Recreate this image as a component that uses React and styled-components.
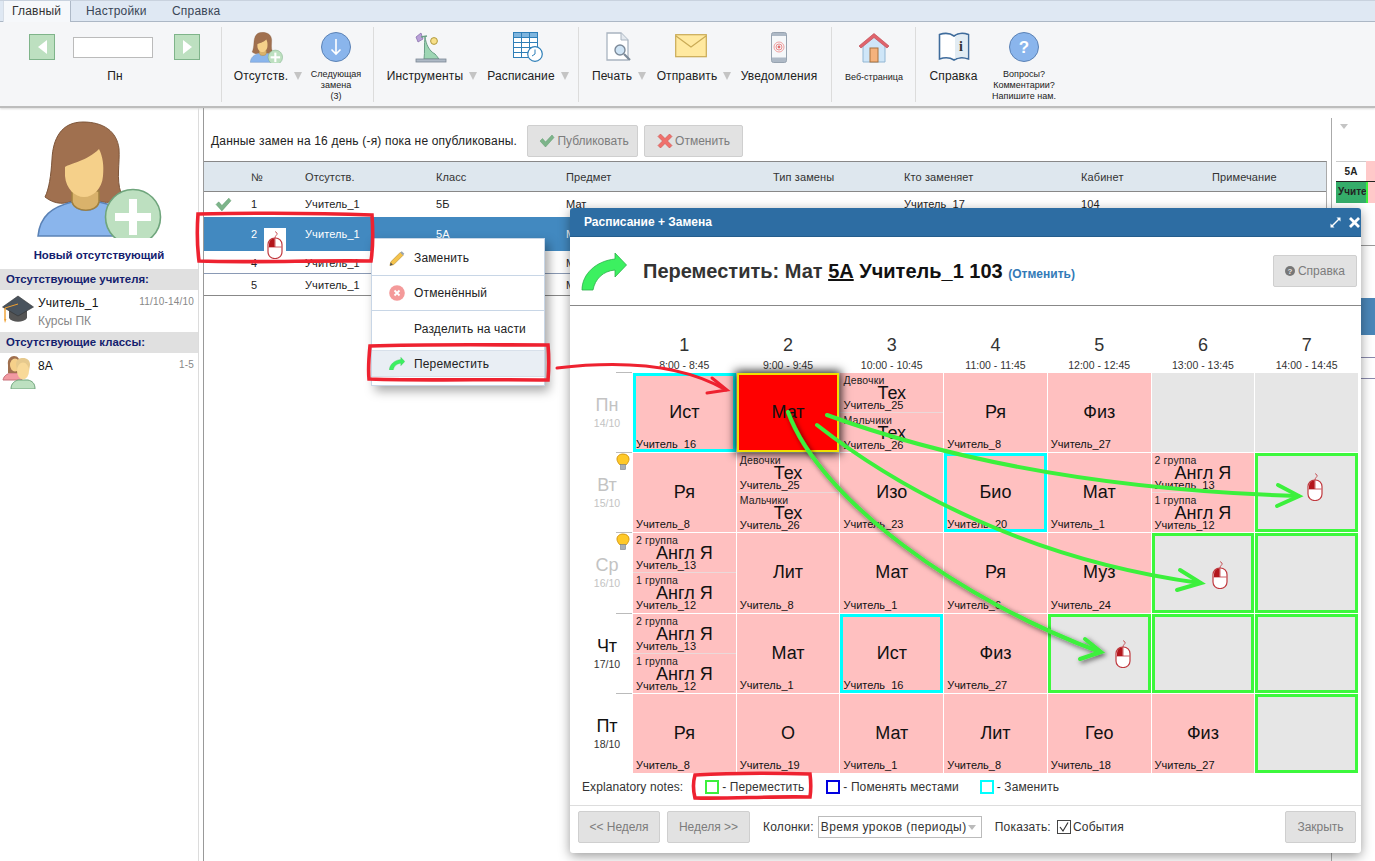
import React from "react";
import styled, { createGlobalStyle } from "styled-components";

const Global = createGlobalStyle`
  html, body { margin: 0; padding: 0; background: #fff; overflow: hidden; }
  body { font-family: "Liberation Sans", Arial, sans-serif; font-size: 12px; color: #222; }
  * { box-sizing: border-box; }
`;

const Page = styled.div`position: relative; width: 1375px; height: 861px; overflow: hidden; background: #fff;`;

/* ---- ribbon ---- */
const TabBar = styled.div`display: flex; height: 22px; padding-left: 3px; background: #dfe8f3; border-top: 1px solid #c9d2de; border-bottom: 1px solid #aeb9c7;`;
const Tab = styled.div`
  height: 21px; padding: 3px 0 0 ${p => p.$active ? 8 : 15}px; width: ${p => p.$w}px; color: #3a4656; letter-spacing: .2px;
  ${p => p.$active && `background: #f6f8fb; border-right: 1px solid #aeb9c7; border-left: 1px solid #d6dde6; color: #333;`}
`;
const Ribbon = styled.div`display: flex; height: 86px; background: #f5f6f8; border-bottom: 2px solid #bdbdbd; box-shadow: 0 1px 2px rgba(0,0,0,.15);`;
const Group = styled.div`display: flex; width: ${p => p.$w}px; height: 75px; margin-top: 5px; padding-left: ${p => p.$pl || 0}px; ${p => !p.$last && "border-right: 1px solid #dcdcdc;"}`;
const Item = styled.div`display: flex; flex-direction: column; align-items: center; width: ${p => p.$w}px; padding-top: 5px; margin-left: ${p => p.$ml || 0}px;`;
const IconSlot = styled.div`height: 33px; display: flex; align-items: flex-start; justify-content: center; margin-left: ${p => p.$shift || 0}px;`;
const ItemLabel = styled.div`display: flex; align-items: center; margin-top: 4px; font-size: 12px; color: #222; white-space: nowrap; letter-spacing: .14px;`;
const TinyLabel = styled.div`font-size: 9px; line-height: 11px; text-align: center; margin-top: ${p => p.$mt ?? 5}px; color: #222; white-space: nowrap;`;
const Drop = styled.span`display: inline-block; margin-left: 6px; width: 0; height: 0; border-left: 4px solid transparent; border-right: 4px solid transparent; border-top: 8px solid #c4c4c4;`;
const NavRow = styled.div`display: flex; align-items: center; width: 171px; justify-content: space-between; margin: 7px 0 0 29px;`;
const NavBtn = styled.div`
  width: 26px; height: 26px; background: #bde0c0; border: 1px solid #7fb48a; display: flex; align-items: center; justify-content: center;
  &::after { content: ""; border-top: 7px solid transparent; border-bottom: 7px solid transparent;
    ${p => p.$dir === "left" ? "border-right: 9px solid #fff;" : "border-left: 9px solid #fff;"} }
`;
const NavInput = styled.div`width: 80px; height: 21px; margin-right: 3px; background: #fff; border: 1px solid #bbb;`;
const NavDay = styled.div`text-align: center; margin-top: 9px; padding-left: 30px; width: 200px; color: #222;`;

/* ---- main ---- */
const Main = styled.div`display: flex; height: 753px;`;
const Sidebar = styled.aside`width: 199px; padding-top: 13px; border-right: 1px solid #dcdcdc; flex: none;`;
const AvatarBox = styled.div`display: flex; justify-content: center;`;
const NewLabel = styled.div`text-align: center; margin-top: 11px; height: 20px; font-weight: bold; font-size: 11.4px; color: #14206e;`;
const SideHead = styled.div`height: 21px; line-height: 21px; background: #e0e0e0; padding-left: 6px; font-weight: bold; font-size: 11.4px; color: #14206e;`;
const SideRow = styled.div`display: flex; height: ${p => p.$h}px; padding: 6px 4px 0 2px;`;
const SideIcon = styled.div`width: 36px; flex: none;`;
const SideText = styled.div`flex: 1; line-height: 14px;`;
const SideName = styled.div`color: #111; letter-spacing: .2px;`;
const SideSub = styled.div`color: #888; margin-top: 4px;`;
const SideDate = styled.div`font-size: 10px; color: #888; letter-spacing: .2px;`;
const Gap = styled.div`width: 4px; flex: none;`;
const Content = styled.section`width: 1124px; flex: none; border-left: 1px solid #999; margin-right: 4px; height: 100%;`;
const TopBar = styled.div`display: flex; align-items: center; height: 53px; padding: 13px 0 0 7px; gap: 10px;`;
const TopText = styled.div`color: #222; letter-spacing: .18px;`;
const GreyBtn = styled.div`
  display: flex; align-items: center; justify-content: center; gap: ${p => p.$gap ?? 2}px; width: ${p => p.$w}px; height: ${p => p.$h || 32}px;
  background: #e2e2e2; border: 1px solid #cfcfcf; border-radius: 2px; color: #7c7c7c; font-size: 12px; flex: none;
  margin-left: ${p => p.$ml || 0}px; padding-left: ${p => p.$pl || 0}px;
`;
const Table = styled.div`width: 1123px; border-top: 1px solid #888; border-right: 1px solid #aaa;`;
const Columns = "47px 54px 131px 130px 207px 131px 177px 131px 114px";
const HeadRow = styled.div`display: grid; grid-template-columns: ${Columns}; height: 30px; align-items: center; background: #dee7ee; border-bottom: 1px solid #888; color: #333; font-size: 11px; letter-spacing: .1px;`;
const Row = styled.div`
  display: grid; grid-template-columns: ${Columns}; height: ${p => p.$h}px; padding-top: ${p => p.$pt}px; font-size: 11px; letter-spacing: .1px;
  color: ${p => p.$sel ? "#fff" : "#222"}; background: ${p => p.$sel ? "#4289c0" : "#fff"}; border-bottom: ${p => p.$line ? `1px solid ${p.$line}` : "none"};
`;
const CheckCell = styled.div`margin: -2px 0 0 11px;`;
const Right = styled.div`flex: 1; border-left: 1px solid #aaa; margin-top: 10px; padding-left: 4px; position: relative; overflow: hidden;`;
const RightArrow = styled.div`margin: 6px 0 0 4px; width: 0; height: 0; border-left: 4px solid transparent; border-right: 4px solid transparent; border-top: 5px solid #c4c4c4;`;
const RightHead = styled.div`display: flex; margin-top: 32px; height: 20px;`;
const RightCell = styled.div`width: 30px; text-align: center; font-weight: bold; font-size: 10px; line-height: 20px; border-top: 1px solid #ccc;`;
const RightPink = styled.div`flex: 1; background: #ffc9c9;`;
const RightRow = styled.div`display: flex; height: 22px; border-top: 1px solid #222;`;
const RightGreen = styled.div`width: 32px; background: #35ad6a; border-right: 2px solid #3cf03c; font-size: 10px; font-weight: bold; line-height: 20px; padding-left: 2px; overflow: hidden; white-space: nowrap;`;
const StripLine = styled.div`position: absolute; right: 0; width: 14px; top: ${p => p.$t}px; height: ${p => p.$h}px; background: ${p => p.$c};`;
const RowMouse = styled.div`position: absolute; left: 264px; top: 228px; width: 22px; height: 24px; background: #fff; display: flex; justify-content: center; z-index: 2; & > svg { margin-top: 3px; }`;

/* ---- context menu ---- */
const Menu = styled.div`
  position: absolute; left: 371px; top: 238px; width: 174px; height: 148px; padding-top: 2px; background: #fff; border: 1px solid #c8d6e6;
  box-shadow: 4px 5px 10px rgba(0,0,0,.35); z-index: 3;
`;
const MenuItem = styled.div`
  display: flex; align-items: center; height: ${p => p.$h || 35}px; border-bottom: ${p => p.$plain ? "none" : "1px solid #c8d6e6"}; padding-left: 17px; gap: 9px; color: #222; letter-spacing: .15px;
  ${p => p.$hl && "background: #e9eef4; margin-top: 4px; border-top: 1px solid #d8e0ea; border-bottom: 1px solid #d8e0ea;"}
`;
const MenuIcon = styled.div`width: 16px; height: 16px; flex: none; display: flex; align-items: center; justify-content: center;`;

/* ---- modal ---- */
const Modal = styled.div`
  position: absolute; left: 570px; top: 208px; width: 791px; height: 645px; background: #fff;
  box-shadow: 0 3px 12px rgba(0,0,0,.4); border-radius: 3px; z-index: 4; display: flex; flex-direction: column;
`;
const ModalBar = styled.div`display: flex; align-items: center; justify-content: space-between; height: 29px; flex: none; background: #2d6da3; border-radius: 3px 3px 0 0; border-bottom: 1px solid #255d8c; padding: 0 1px 0 14px; color: #fff; font-weight: bold; font-size: 12px;`;
const ModalTools = styled.div`display: flex; align-items: center; gap: 8px;`;
const TitleRow = styled.div`display: flex; align-items: center; height: 69px; flex: none; padding: 0 4px 0 11px; border-bottom: 1px solid #888;`;
const TitleText = styled.div`font-size: 20px; font-weight: bold; margin-left: 16px; color: #111; flex: 1; white-space: nowrap;`;
const TitleGrey = styled.span`color: #333;`;
const TitleU = styled.span`text-decoration: underline;`;
const CancelLink = styled.span`font-size: 12px; color: #337ab7;`;
const HeadGrid = styled.div`display: grid; grid-template-columns: 62px repeat(7, 1fr); column-gap: 1px; height: 67px; padding-right: 3px; flex: none;`;
const HeadCol = styled.div`display: flex; flex-direction: column; align-items: center; justify-content: flex-end; padding-bottom: 1px;`;
const HeadNum = styled.div`font-size: 18px; line-height: 20px; color: #333; margin-bottom: 4px;`;
const HeadTime = styled.div`font-size: 10.5px; line-height: 13px; color: #333; white-space: nowrap;`;
const Grid = styled.div`display: grid; grid-template-columns: 62px repeat(7, 1fr); grid-auto-rows: 79.2px; gap: 1px; padding-right: 3px; flex: none; height: 401px;`;
const DayCell = styled.div`position: relative; display: flex; flex-direction: column; align-items: center; justify-content: center; padding-right: 2px; color: ${p => p.$dim ? "#c3c3c3" : "#333"};`;
const DayTick = styled.div`position: absolute; top: -1px; right: 0; width: 16px; height: 1px; background: #bbb;`;
const DayName = styled.div`font-size: 18px; line-height: 20px; margin-left: 14px; ${p => p.$dark && "color: #111;"}`;
const DayDate = styled.div`font-size: 10.5px; line-height: 13px; margin: 2px 0 0 14px;`;
const Bulb = styled.div`position: absolute; right: 2px; top: 0; width: 14px; height: 18px;`;
const Cell = styled.div`
  position: relative; display: flex; flex-direction: column;
  background: ${p => p.$v === "red" ? "#ff0000" : p.$v === "empty" ? "#e6e6e6" : "#ffc0c0"};
  ${p => p.$v === "red" && "border: 2px solid #f0e000; box-shadow: 0 0 9px 2px rgba(0,0,0,.85); z-index: 2;"}
  ${p => p.$b === "cyan" && "outline: 3px solid #00ffff; outline-offset: -3px;"}
  ${p => p.$b === "green" && "outline: 3px solid #3cf83c; outline-offset: -3px;"}
`;
const CellName = styled.div`flex: 1; display: flex; align-items: center; justify-content: center; font-size: 18px; color: #111;`;
const CellTeacher = styled.div`font-size: 11px; line-height: 12px; margin-top: ${p => p.$over ? -14 : 0}px; padding: 0 0 2px 3px; color: #111; white-space: nowrap;`;
const Half = styled.div`
  flex: 1; display: flex; flex-direction: column; min-height: 0; padding-top: 2px;
  ${p => p.$top && "border-bottom: 1px solid #ebd9d9;"}
`;
const HalfLabel = styled.div`font-size: 10.5px; line-height: 11px; padding-left: 3px; color: #222; letter-spacing: .15px; white-space: nowrap;`;
const HalfName = styled.div`font-size: 18px; line-height: 13px; margin: 1px 0 -1px; text-align: center; color: #111;`;
const MouseSlot = styled.div`flex: 1; display: flex; align-items: center; justify-content: center; padding: ${p => p.$pt}px 0 ${p => p.$pb}px ${p => p.$pl}px;`;

const Legend = styled.div`display: flex; align-items: center; height: 32px; padding: 0 0 6px 12px; flex: none; border-bottom: 1px solid #ddd; color: #333; letter-spacing: .1px;`;
const LegendTitle = styled.div`margin-right: 22px;`;
const Swatch = styled.span`width: 14px; height: 14px; border: 2px solid ${p => p.$c}; margin-right: 3px; flex: none;`;
const LegendText = styled.div`margin-right: ${p => p.$mr}px; white-space: nowrap;`;
const Footer = styled.div`display: flex; align-items: center; flex: 1; padding: 0 5px 5px 8px; color: #333;`;
const FootLabel = styled.div`margin-left: ${p => p.$ml}px; white-space: nowrap; letter-spacing: .2px;`;
const Select = styled.div`
  position: relative; width: 164px; height: 22px; margin-left: 4px; border: 1px solid #bbb; background: #fff; padding: 3px 0 0 2px; color: #333; white-space: nowrap; letter-spacing: .4px;
  &::after { content: ""; position: absolute; right: 5px; top: 8px; border-left: 4px solid transparent; border-right: 4px solid transparent; border-top: 5px solid #bbb; }
`;
const CheckBox = styled.div`width: 14px; height: 14px; margin-left: 6px; border: 1px solid #444; display: flex; align-items: center; justify-content: center; background: #fff;`;
const Spacer = styled.div`flex: 1;`;
const Overlay = styled.svg`position: absolute; left: 0; top: 0; width: 1375px; height: 861px; z-index: 5; pointer-events: none;`;

/* ---- icons ---- */
const Person = ({ w }) => (
  <svg width={w} viewBox="0 0 125 117">
    <path d="M46 1C24 1 16 18 15 38C14 55 12 68 8 76C18 84 30 84 38 78L58 78C68 84 80 82 84 72C79 58 83 42 82 28C80 10 66 1 46 1Z" fill="#a0704f" stroke="#7d5539" strokeWidth="1" />
    <path d="M1 115C3 95 15 86 35 81C40 92 58 92 62 81C85 86 108 95 110 115Z" fill="#8ab5ec" stroke="#5b82b5" strokeWidth="1.5" />
    <path d="M35 70L35 81C38 92 60 92 62 81L62 70Z" fill="#d9b26b" stroke="#a08040" strokeWidth="1.5" />
    <path d="M28 46C34 42 50 40 62 28C66 36 67 45 66 55C65 68 56 76 47 76C38 76 29 68 28 55Z" fill="#f5d08a" />
    <circle cx="96" cy="96" r="27.5" fill="#bde0c0" stroke="#6fa57c" strokeWidth="1.6" />
    <rect x="92" y="78" width="8" height="36" fill="#fff" />
    <rect x="78" y="92" width="36" height="8" fill="#fff" />
  </svg>
);
const IconDown = () => (
  <svg width="30" height="30" viewBox="0 0 30 30"><circle cx="15" cy="15" r="14.5" fill="#8ab5ec" stroke="#5b82b5" /><path d="M15 7V22M10.5 17.5L15 22L19.5 17.5" fill="none" stroke="#fff" strokeWidth="1.6" /></svg>
);
const IconTools = () => (
  <svg width="32" height="31" viewBox="0 0 32 31">
    <path d="M1 5L6 1L8 7L3 10Z" fill="#b9a0d8" stroke="#8a72ad" strokeWidth=".8" />
    <path d="M6 5L12 4" stroke="#6a9f86" strokeWidth="1.5" />
    <path d="M10 5C11 12 14 19 20 22C22 24 23 26 24 27L9 27C10 20 9 12 10 5Z" fill="#9ed6b4" stroke="#6a9f86" strokeWidth="1" />
    <circle cx="19" cy="9" r="3.4" fill="#f8e08a" stroke="#b09a40" />
    <rect x="1" y="27" width="30" height="3" fill="#aeb9c6" stroke="#7c8794" strokeWidth=".8" />
  </svg>
);
const IconSchedule = () => (
  <svg width="30" height="30" viewBox="0 0 30 30">
    <rect x=".5" y=".5" width="24" height="25" fill="#fff" stroke="#2f7fb8" />
    <rect x=".5" y=".5" width="24" height="5" fill="#7fb5de" stroke="#2f7fb8" />
    <path d="M.5 10.5H24.5M.5 15.5H24.5M.5 20.5H24.5M8.5 .5V25.5M16.5 .5V25.5" stroke="#2f7fb8" fill="none" />
    <circle cx="22" cy="22" r="7.3" fill="#fff" stroke="#2f7fb8" strokeWidth="1.2" /><path d="M22 17.5V22L19 24" stroke="#2f7fb8" fill="none" />
  </svg>
);
const IconPrint = () => (
  <svg width="28" height="30" viewBox="0 0 28 30">
    <path d="M1 1H15L22 8V28H1Z" fill="#fff" stroke="#a9b4c0" strokeWidth="1.3" /><path d="M15 1V8H22" fill="#e4e9ef" stroke="#a9b4c0" />
    <circle cx="14" cy="18" r="5" fill="#cfe4f5" stroke="#7c8a99" strokeWidth="1.4" /><path d="M18 22L24 28" stroke="#7c8a99" strokeWidth="2.2" />
  </svg>
);
const IconMail = () => (
  <svg width="32" height="24" viewBox="0 0 32 24" style={{ marginTop: 2 }}><rect x=".7" y=".7" width="30.6" height="22" fill="#ffe9a0" stroke="#c9aa55" strokeWidth="1.2" /><path d="M1 2L16 13L31 2" fill="none" stroke="#c9aa55" strokeWidth="1.2" /></svg>
);
const IconPhone = () => (
  <svg width="16" height="31" viewBox="0 0 16 31"><rect x=".5" y=".5" width="15" height="30" rx="2" fill="#aeb9c6" stroke="#97a3b0" /><rect x="1" y="4" width="14" height="21.5" fill="#f6f8fa" /><circle cx="8" cy="15" r="5" fill="none" stroke="#f0a0a0" /><circle cx="8" cy="15" r="3" fill="none" stroke="#ec8c8c" /><circle cx="8" cy="15" r="1.4" fill="#e07070" /></svg>
);
const IconHouse = () => (
  <svg width="32" height="31" viewBox="0 0 32 31"><path d="M5 13V30H27V13L16 3Z" fill="#cfe6f8" stroke="#92b6d3" /><path d="M1 14L16 1.5L31 14L29 16L16 5.5L3 16Z" fill="#e0646c" stroke="#c04c54" strokeWidth=".7" /><rect x="12" y="16" width="8" height="14" fill="#f5b27c" stroke="#a8703c" /></svg>
);
const IconBook = () => (
  <svg width="32" height="30" viewBox="0 0 32 30"><path d="M16 4C12 1 6 1 1.5 2.5V27C6 25.5 12 25.5 16 28C20 25.5 26 25.5 30.5 27V2.5C26 1 20 1 16 4Z" fill="#fff" stroke="#3f6c9c" strokeWidth="1.6" /><path d="M17 4.5C20 2.5 25 2 29.5 3.2V25.7C25 24.6 20 25 17 26.7Z" fill="#e2ecf3" /><text x="23" y="19" fontSize="14" fontWeight="bold" fontFamily="Liberation Serif, serif" textAnchor="middle" fill="#333">i</text></svg>
);
const IconHelp = () => (
  <svg width="30" height="30" viewBox="0 0 30 30"><circle cx="15" cy="15" r="14.5" fill="#8ab5ec" stroke="#5b82b5" /><text x="15" y="21" fontSize="17" fontWeight="bold" fontFamily="Liberation Sans, sans-serif" textAnchor="middle" fill="#fff">?</text></svg>
);
const IconCap = () => (
  <svg width="32" height="29" viewBox="0 0 32 29" style={{ marginTop: -1 }}><path d="M7 14V23C10 28 22 28 25 23V14Z" fill="#555" /><path d="M16 1L31.5 12L16 21L.5 12Z" fill="#49535d" stroke="#333" strokeWidth=".6" /><path d="M3 13V24" stroke="#f0a030" strokeWidth="1.4" /><path d="M2 24L3 28L4.4 24Z" fill="#f0a030" /><path d="M3 13L16 9" stroke="#f0a030" strokeWidth="1" /></svg>
);
const IconClass = () => (
  <svg width="34" height="34" viewBox="0 0 34 34" style={{ marginTop: -4 }}>
    <path d="M1 25C2 20 6 19 8 18L16 18C19 19 20 22 20 25Z" fill="#f29aa2" stroke="#c8707a" />
    <path d="M6 10C5 4 9 1 12 1C16 1 18 4 18 9L18 18L6 18Z" fill="#a0704f" />
    <ellipse cx="13" cy="10" rx="5" ry="6.5" fill="#f5d08a" />
    <path d="M9 34C9 28 13 26 16 25L26 25C30 26 33 28 33 34Z" fill="#bde0c0" stroke="#6fa57c" />
    <path d="M14 9C14 4 18 3 21 3C25 3 28 5 28 10L27 16L15 16Z" fill="#e6c98d" />
    <ellipse cx="21" cy="16" rx="6" ry="8.5" fill="#f8d998" />
  </svg>
);
const IconBulb = () => (
  <svg width="14" height="18" viewBox="0 0 14 18"><path d="M3.5 11.5C2 9.5 1 8 1 6C1 3 3.5 1 7 1C10.5 1 13 3 13 6C13 8 12 9.5 10.5 11.5Z" fill="#ffc928" stroke="#d89a10" /><rect x="4.5" y="11.5" width="5" height="5" fill="#aab0b6" stroke="#7c8288" strokeWidth=".6" /></svg>
);
const IconCheck = ({ s }) => (
  <svg width={s} height={s} viewBox="0 0 16 16"><path d="M1 8L3.5 5.5L6.5 9L13 2L15 4.5L6.5 14Z" fill="#7db48a" stroke="#5d9a6c" strokeWidth=".5" /></svg>
);
const IconCross = () => (
  <svg width="16" height="16" viewBox="0 0 16 16"><path d="M1 3.5L3.5 1L8 5.5L12.5 1L15 3.5L10.5 8L15 12.5L12.5 15L8 10.5L3.5 15L1 12.5L5.5 8Z" fill="#f0706c" stroke="#c85450" strokeWidth=".6" /></svg>
);
const IconPencil = () => (
  <svg width="17" height="17" viewBox="0 0 17 17"><path d="M2 12L12 2L15 5L5 15L1 16Z" fill="#f5c34c" stroke="#b89030" strokeWidth=".7" /><path d="M12 2L13.5 .7L16.3 3.5L15 5Z" fill="#9aa4ae" /><path d="M1 16L1.8 12.8L4.2 15.2Z" fill="#555" /></svg>
);
const IconStop = () => (
  <svg width="16" height="16" viewBox="0 0 16 16"><circle cx="8" cy="8" r="7.8" fill="#f49a9a" /><path d="M5.5 5.5L10.5 10.5M10.5 5.5L5.5 10.5" stroke="#fff" strokeWidth="1.8" /></svg>
);
const GreenTurn = ({ w }) => (
  <svg width={w} viewBox="0 0 46 39"><path d="M1 38C1 22 15 9 34 7L34 1L45.5 13L34 25L34 18C22 19 14 27 12 38Z" fill="#3cf060" stroke="#2bb04a" strokeWidth=".8" /></svg>
);
const Mouse = () => (
  <svg width="16" height="28" viewBox="0 0 16 28">
    <path d="M8 7C8 4 11 4 10 2L8 .5" fill="none" stroke="#c0393f" strokeWidth=".8" />
    <rect x="1" y="7" width="14" height="20.5" rx="6.5" fill="#fff" stroke="#c0393f" strokeWidth="1.2" />
    <path d="M1.6 16H14.5M8 7.2V16" stroke="#c0393f" strokeWidth=".8" />
    <path d="M2 16V13C2 9.5 4 7.6 7.6 7.3V16Z" fill="#b3161c" />
  </svg>
);
const IconExpand = () => (
  <svg width="11" height="11" viewBox="0 0 11 11"><path d="M6.5 .5H10.5V4.5L9 3L3 9L4.5 10.5H.5V6.5L2 8L8 2Z" fill="#fff" /></svg>
);
const IconClose = () => (
  <svg width="11" height="11" viewBox="0 0 10 10"><path d="M1.8 0L5 3.2L8.2 0L10 1.8L6.8 5L10 8.2L8.2 10L5 6.8L1.8 10L0 8.2L3.2 5L0 1.8Z" fill="#fff" /></svg>
);
const IconInfo = () => (
  <svg width="10" height="10" viewBox="0 0 10 10"><circle cx="5" cy="5" r="5" fill="#777" /><text x="5" y="8" fontSize="8" fontWeight="bold" fontFamily="Liberation Sans, sans-serif" textAnchor="middle" fill="#e2e2e2">?</text></svg>
);

/* ---- data ---- */
const teach = n => `Учитель_${n}`;
const tech = { split: [["Девочки", "Тех", teach(25)], ["Мальчики", "Тех", teach(26)]] };
const angl = { split: [["2 группа", "Англ Я", teach(13)], ["1 группа", "Англ Я", teach(12)]] };
const empty = { v: "empty" };
const go = { v: "empty", b: "green" };
const days = [
  { d: "Пн", date: "14/10", dim: true, cells: [{ n: "Ист", t: 16, b: "cyan" }, { n: "Мат", v: "red" }, tech, { n: "Ря", t: 8 }, { n: "Физ", t: 27 }, empty, empty] },
  { d: "Вт", date: "15/10", dim: true, bulb: true, cells: [{ n: "Ря", t: 8 }, tech, { n: "Изо", t: 23 }, { n: "Био", t: 20, b: "cyan" }, { n: "Мат", t: 1 }, angl, { ...go, m: [16, 0, 12] }] },
  { d: "Ср", date: "16/10", dim: true, bulb: true, cells: [angl, { n: "Лит", t: 8 }, { n: "Мат", t: 1 }, { n: "Ря", t: 6 }, { n: "Муз", t: 24 }, { ...go, m: [34, 4, 0] }, go] },
  { d: "Чт", date: "17/10", cells: [angl, { n: "Мат", t: 1 }, { n: "Ист", t: 16, b: "cyan" }, { n: "Физ", t: 27 }, { ...go, m: [48, 2, 0] }, go, go] },
  { d: "Пт", date: "18/10", cells: [{ n: "Ря", t: 8 }, { n: "О", t: 19 }, { n: "Мат", t: 1 }, { n: "Лит", t: 8 }, { n: "Гео", t: 18 }, { n: "Физ", t: 27 }, go] },
];
const periods = [["1", "8:00 - 8:45"], ["2", "9:00 - 9:45"], ["3", "10:00 - 10:45"], ["4", "11:00 - 11:45"], ["5", "12:00 - 12:45"], ["6", "13:00 - 13:45"], ["7", "14:00 - 14:45"]];

const LessonCell = ({ c }) => {
  if (c.split) {
    return (
      <Cell>
        {c.split.map(([label, name, t], i) => (
          <Half key={i} $top={i === 0}>
            <HalfLabel>{label}</HalfLabel>
            <HalfName>{name}</HalfName>
            <CellTeacher>{t}</CellTeacher>
          </Half>
        ))}
      </Cell>
    );
  }
  return (
    <Cell $v={c.v} $b={c.b}>
      {c.m ? <MouseSlot $pl={c.m[0]} $pt={c.m[1]} $pb={c.m[2]}><Mouse /></MouseSlot> : <CellName>{c.n}</CellName>}
      {c.t && <CellTeacher $over>{teach(c.t)}</CellTeacher>}
    </Cell>
  );
};

const Green = "#3cf03c";
const RedLine = "#ee2230";

const Annotations = () => (
  <Overlay viewBox="0 0 1375 861">
    <defs>
      <filter id="sh" x="-20%" y="-20%" width="140%" height="140%"><feDropShadow dx="2" dy="2" stdDeviation="2.5" floodColor="#000" floodOpacity=".6" /></filter>
    </defs>
    <g fill="none" stroke={RedLine} strokeWidth="3.6" strokeLinecap="round">
      <path d="M198 214C250 213 320 213 372 215C373 230 373 248 371 261C320 260 250 263 199 261C197 245 197 228 198 214Z" />
      <path d="M370 346C430 344 490 345 548 345C549 357 549 368 548 380C490 379 430 381 369 379C368 368 369 356 370 346Z" />
      <path d="M695 775C730 773 775 773 810 774C811 782 811 790 810 797C770 796 730 799 695 798C693 790 693 782 695 775Z" />
    </g>
    <g fill="none" stroke={RedLine} strokeWidth="3" strokeLinecap="round">
      <path d="M557 368C625 360 685 366 726 390" />
      <path d="M712 378L727 390L707 393" />
    </g>
    <g fill="none" stroke={Green} strokeWidth="4" strokeLinecap="round">
      <path d="M827 415C950 460 1100 490 1298 496" />
      <path d="M1278 485L1299 496L1277 506" />
      <path d="M817 425C900 490 1030 560 1200 583" />
      <path d="M1180 570L1201 583L1177 590" />
      <g filter="url(#sh)">
        <path d="M788 412C820 500 960 600 1100 652" />
        <path d="M1085 639L1101 652L1080 659" />
      </g>
    </g>
  </Overlay>
);

export default function App() {
  return (
    <Page>
      <Global />
      <TabBar>
        <Tab $active $w={68}>Главный</Tab>
        <Tab $w={86}>Настройки</Tab>
        <Tab $w={70}>Справка</Tab>
      </TabBar>
      <Ribbon>
        <Group $w={222}>
          <div>
            <NavRow><NavBtn $dir="left" /><NavInput /><NavBtn $dir="right" /></NavRow>
            <NavDay>Пн</NavDay>
          </div>
        </Group>
        <Group $w={152} $pl={7}>
          <Item $w={78}>
            <IconSlot $shift={-4}><Person w={33} /></IconSlot>
            <ItemLabel>Отсутств.<Drop /></ItemLabel>
          </Item>
          <Item $w={58}>
            <IconSlot><IconDown /></IconSlot>
            <TinyLabel $mt={4}>Следующая<br />замена<br />(3)</TinyLabel>
          </Item>
        </Group>
        <Group $w={205} $pl={14}>
          <Item $w={88}>
            <IconSlot $shift={-2}><IconTools /></IconSlot>
            <ItemLabel>Инструменты<Drop /></ItemLabel>
          </Item>
          <Item $w={92} $ml={6}>
            <IconSlot><IconSchedule /></IconSlot>
            <ItemLabel>Расписание<Drop /></ItemLabel>
          </Item>
        </Group>
        <Group $w={253} $pl={13}>
          <Item $w={54}>
            <IconSlot $shift={2}><IconPrint /></IconSlot>
            <ItemLabel>Печать<Drop /></ItemLabel>
          </Item>
          <Item $w={72} $ml={12}>
            <IconSlot $shift={-6}><IconMail /></IconSlot>
            <ItemLabel>Отправить<Drop /></ItemLabel>
          </Item>
          <Item $w={78} $ml={10}>
            <IconSlot><IconPhone /></IconSlot>
            <ItemLabel>Уведомления</ItemLabel>
          </Item>
        </Group>
        <Group $w={84} $pl={13}>
          <Item $w={58}>
            <IconSlot><IconHouse /></IconSlot>
            <TinyLabel $mt={7}>Веб-страница</TinyLabel>
          </Item>
        </Group>
        <Group $w={200} $pl={13} $last>
          <Item $w={49}>
            <IconSlot><IconBook /></IconSlot>
            <ItemLabel>Справка</ItemLabel>
          </Item>
          <Item $w={64} $ml={14}>
            <IconSlot><IconHelp /></IconSlot>
            <TinyLabel $mt={4}>Вопросы?<br />Комментарии?<br />Напишите нам.</TinyLabel>
          </Item>
        </Group>
      </Ribbon>
      <Main>
        <Sidebar>
          <AvatarBox><Person w={125} /></AvatarBox>
          <NewLabel>Новый отсутствующий</NewLabel>
          <SideHead>Отсутствующие учителя:</SideHead>
          <SideRow $h={42}>
            <SideIcon><IconCap /></SideIcon>
            <SideText><SideName>Учитель_1</SideName><SideSub>Курсы ПК</SideSub></SideText>
            <SideDate>11/10-14/10</SideDate>
          </SideRow>
          <SideHead>Отсутствующие классы:</SideHead>
          <SideRow $h={42}>
            <SideIcon><IconClass /></SideIcon>
            <SideText><SideName>8А</SideName></SideText>
            <SideDate>1-5</SideDate>
          </SideRow>
        </Sidebar>
        <Gap />
        <Content>
          <TopBar>
            <TopText>Данные замен на 16 день (-я) пока не опубликованы.</TopText>
            <GreyBtn $w={111} $pl={3}><IconCheck s={16} />Публиковать</GreyBtn>
            <GreyBtn $w={99} $ml={-4}><IconCross />Отменить</GreyBtn>
          </TopBar>
          <Table>
            <HeadRow>
              <div />
              <div>№</div><div>Отсутств.</div><div>Класс</div><div>Предмет</div><div>Тип замены</div><div>Кто заменяет</div><div>Кабинет</div><div>Примечание</div>
            </HeadRow>
            <Row $h={25} $pt={6}>
              <CheckCell><IconCheck s={17} /></CheckCell>
              <div>1</div><div>Учитель_1</div><div>5Б</div><div>Мат</div><div /><div>Учитель_17</div><div>104</div><div />
            </Row>
            <Row $h={34} $sel $pt={11}>
              <div /><div>2</div><div>Учитель_1</div><div>5А</div><div>Мат</div><div /><div /><div /><div />
            </Row>
            <Row $h={23} $pt={6} $line="#8a9ab5">
              <div /><div>4</div><div>Учитель_1</div><div>5А</div><div>Мат</div><div /><div /><div /><div />
            </Row>
            <Row $h={22} $pt={5} $line="#888">
              <div /><div>5</div><div>Учитель_1</div><div>5А</div><div>Мат</div><div /><div /><div /><div />
            </Row>
          </Table>
        </Content>
        <Right>
          <RightArrow />
          <RightHead><RightCell>5А</RightCell><RightPink /></RightHead>
          <RightRow><RightGreen>Учите.</RightGreen><RightPink /></RightRow>
          <StripLine $t={127} $h={1} $c="#999" />
          <StripLine $t={180} $h={37} $c="#4a86b8" />
          <StripLine $t={239} $h={1} $c="#88a" />
          <StripLine $t={260} $h={1} $c="#88a" />
        </Right>
      </Main>

      <RowMouse><Mouse /></RowMouse>

      <Menu>
        <MenuItem><MenuIcon><IconPencil /></MenuIcon>Заменить</MenuItem>
        <MenuItem><MenuIcon><IconStop /></MenuIcon>Отменённый</MenuItem>
        <MenuItem $plain><MenuIcon />Разделить на части</MenuItem>
        <MenuItem $hl $h={27}><MenuIcon><GreenTurn w={17} /></MenuIcon>Переместить</MenuItem>
      </Menu>

      <Modal>
        <ModalBar>
          Расписание + Замена
          <ModalTools><IconExpand /><IconClose /></ModalTools>
        </ModalBar>
        <TitleRow>
          <GreenTurn w={46} />
          <TitleText>
            <TitleGrey>Переместить: Мат </TitleGrey><TitleU>5А</TitleU> Учитель_1 103 <CancelLink>(Отменить)</CancelLink>
          </TitleText>
          <GreyBtn $w={84} $gap={3}><IconInfo />Справка</GreyBtn>
        </TitleRow>
        <HeadGrid>
          <div />
          {periods.map(([n, t]) => (
            <HeadCol key={n}><HeadNum>{n}</HeadNum><HeadTime>{t}</HeadTime></HeadCol>
          ))}
        </HeadGrid>
        <Grid>
          {days.map(day => (
            <React.Fragment key={day.d}>
              <DayCell $dim={day.dim}>
                <DayTick />
                {day.bulb && <Bulb><IconBulb /></Bulb>}
                <DayName $dark={!day.dim}>{day.d}</DayName>
                <DayDate>{day.date}</DayDate>
              </DayCell>
              {day.cells.map((c, i) => <LessonCell key={i} c={c} />)}
            </React.Fragment>
          ))}
        </Grid>
        <Legend>
          <LegendTitle>Explanatory notes:</LegendTitle>
          <Swatch $c="#3cf03c" /><LegendText $mr={22}>- Переместить</LegendText>
          <Swatch $c="#0000e0" /><LegendText $mr={21}>- Поменять местами</LegendText>
          <Swatch $c="#00ffff" /><LegendText $mr={0}>- Заменить</LegendText>
        </Legend>
        <Footer>
          <GreyBtn $w={82}>&lt;&lt; Неделя</GreyBtn>
          <GreyBtn $w={83} $ml={7}>Неделя &gt;&gt;</GreyBtn>
          <FootLabel $ml={13}>Колонки:</FootLabel>
          <Select>Время уроков (периоды)</Select>
          <FootLabel $ml={13}>Показать:</FootLabel>
          <CheckBox><svg width="12" height="12" viewBox="0 0 12 12"><path d="M2 6L5 10L10 1.5" fill="none" stroke="#333" strokeWidth="1.2" /></svg></CheckBox>
          <FootLabel $ml={2}>События</FootLabel>
          <Spacer />
          <GreyBtn $w={71}>Закрыть</GreyBtn>
        </Footer>
      </Modal>

      <Annotations />
    </Page>
  );
}
